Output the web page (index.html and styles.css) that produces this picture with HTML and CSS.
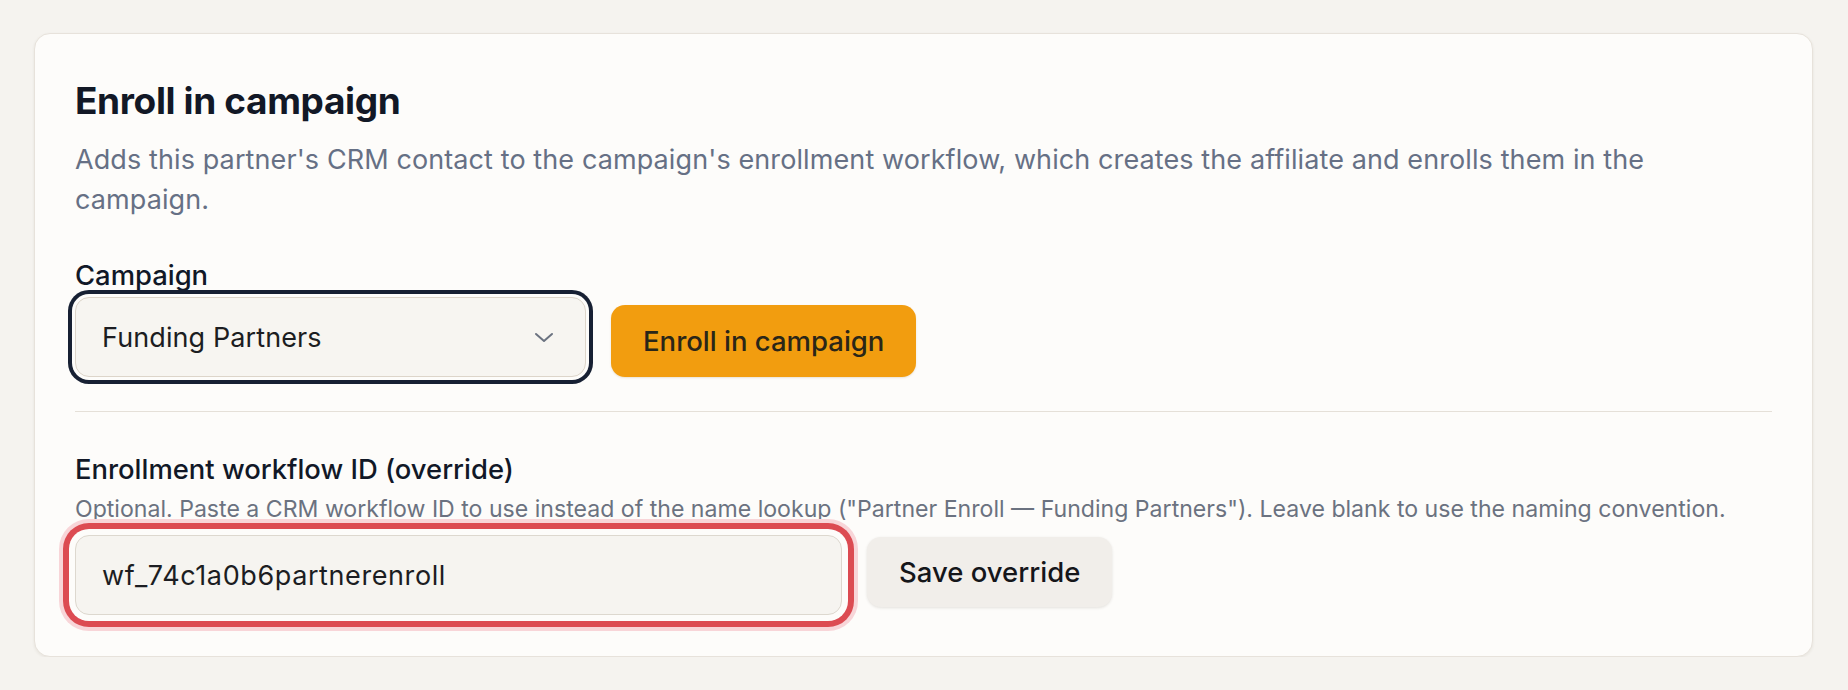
FILE: index.html
```html
<!DOCTYPE html>
<html lang="en">
<head>
<meta charset="utf-8">
<title>Enroll in campaign</title>
<link rel="stylesheet" href="styles.css">
</head>
<body>
<main class="page">
  <section class="card">
    <h2 class="title">Enroll in campaign</h2>
    <p class="desc">Adds this partner's CRM contact to the campaign's enrollment workflow, which creates the affiliate and enrolls them in the campaign.</p>

    <div class="field">
      <label class="label">Campaign</label>
      <div class="row row-end">
        <div class="select is-focused">
          <span class="select-value">Funding Partners</span>
          <svg class="chev" width="20" height="11" viewBox="0 0 20 11" aria-hidden="true">
            <polyline points="2,2 10,9 18,2" fill="none" stroke="#6b7280" stroke-width="2" stroke-linecap="round" stroke-linejoin="round"/>
          </svg>
        </div>
        <button class="btn btn-primary">Enroll in campaign</button>
      </div>
    </div>

    <hr class="divider">

    <div class="field">
      <label class="label">Enrollment workflow ID (override)</label>
      <p class="help">Optional. Paste a CRM workflow ID to use instead of the name lookup ("Partner Enroll — Funding Partners"). Leave blank to use the naming convention.</p>
      <div class="row row-start">
        <div class="input is-error">wf_74c1a0b6partnerenroll</div>
        <button class="btn btn-secondary">Save override</button>
      </div>
    </div>
  </section>
</main>
</body>
</html>
```

FILE: styles.css
```css
* { box-sizing: border-box; }

html, body {
  margin: 0;
  padding: 0;
}

body {
  background: #f5f3ef;
  font-family: Inter, "Noto Sans", "Liberation Sans", sans-serif;
  color: #111827;
}

.page {
  padding: 33px 35px 0 34px;
}

.card {
  background: #fdfcfa;
  border: 1px solid #e7e2db;
  border-radius: 16px;
  box-shadow: 0 1px 3px rgba(60, 50, 30, 0.08);
  padding: 45px 40px 41px 40px;
}

.title {
  margin: 0;
  font-size: 37px;
  line-height: 44px;
  font-weight: 700;
  letter-spacing: -0.01em;
  color: #121826;
}

.desc {
  margin: 17px 0 0 0;
  font-size: 27px;
  line-height: 40px;
  letter-spacing: 0.1px;
  color: #667085;
}

.field {
  display: flex;
  flex-direction: column;
}

.desc + .field {
  margin-top: 37px;
}

.label {
  display: block;
  font-size: 27.4px;
  line-height: 36px;
  font-weight: 500;
  color: #111827;
}

.row {
  display: flex;
  gap: 25px;
}

.row-end {
  align-items: flex-end;
  margin-top: 4px;
}

.row-start {
  align-items: flex-start;
  margin-top: 10px;
}

.select {
  width: 511px;
  height: 80px;
  display: flex;
  align-items: center;
  justify-content: space-between;
  padding: 0 31px 0 26px;
  background: #f7f5f1;
  border: 1px solid #ddd5ca;
  border-radius: 14px;
  font-size: 27px;
  letter-spacing: 0.1px;
  color: #1c1d22;
}

.select.is-focused {
  box-shadow: 0 0 0 3px #fdfcfa, 0 0 0 7px #172033;
}

.chev {
  display: block;
}

.btn {
  border: none;
  font-family: inherit;
  font-size: 27.5px;
  font-weight: 500;
  border-radius: 14px;
  padding: 0 32px;
  cursor: pointer;
}

.btn-primary {
  height: 72px;
  background: #f29d0f;
  color: #2a2618;
  box-shadow: 0 1px 2px rgba(120, 80, 0, 0.15);
}

.btn-secondary {
  height: 70px;
  margin-top: 2px;
  background: #f1eeea;
  color: #15161a;
  box-shadow: 0 1px 3px rgba(40, 30, 20, 0.12);
}

.divider {
  margin: 34px 0 0 0;
  border: none;
  border-top: 1px solid #e5e0d8;
  height: 0;
}

.divider + .field {
  margin-top: 39px;
}

.help {
  margin: 6px 0 0 0;
  font-size: 23.1px;
  line-height: 32px;
  color: #6b7280;
}

.input {
  width: 767px;
  height: 80px;
  display: flex;
  align-items: center;
  padding: 0 26px;
  background: #f6f4f0;
  border: 1px solid #ddd8cf;
  border-radius: 14px;
  font-size: 27px;
  letter-spacing: 0.6px;
  color: #1c1d22;
}

.input.is-error {
  box-shadow: 0 0 0 6px #fdfcfa, 0 0 0 12px #dc4b52, 0 0 0 16px #f8d5d8;
}
```
